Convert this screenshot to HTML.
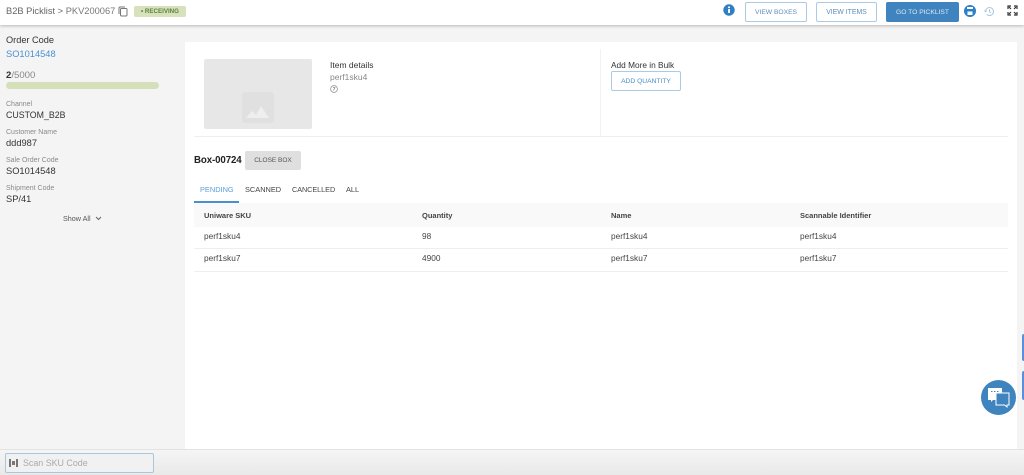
<!DOCTYPE html>
<html><head><meta charset="utf-8">
<style>
html,body{margin:0;padding:0}
body{width:1024px;height:475px;overflow:hidden;background:#f4f4f4;font-family:"Liberation Sans",sans-serif;position:relative;color:#333}
.a{position:absolute;white-space:nowrap}
.btn{position:absolute;box-sizing:border-box;height:20px;border:1px solid #a9cbe6;border-radius:2px;background:#fff;color:#5b8fb9;font-size:6.7px;text-align:center;line-height:20px}
.lbl{font-size:7px;color:#8a8a8a}
.val{font-size:9.3px;color:#333}
.th{font-size:7.5px;color:#444;font-weight:bold}
.td{font-size:8.3px;color:#444}
.tab{font-size:7.4px;color:#444}
</style></head><body>
<div class="a" style="left:0;top:0;width:1024px;height:25px;background:#fff;box-shadow:0 1px 3px rgba(0,0,0,.25)"></div>
<div class="a" style="left:6px;top:6px;font-size:9.3px;color:#666">B2B Picklist &gt; <span style="color:#777">PKV200067</span></div>
<svg class="a" style="left:118px;top:6px" width="10" height="11" viewBox="0 0 10 11" fill="none" stroke="#777" stroke-width="1"><rect x="2.5" y="2.5" width="6.5" height="7.5" rx="1"/><path d="M1 8V2a1 1 0 0 1 1-1h5"/></svg>
<div class="a" style="left:134px;top:6px;width:52px;height:11px;background:#d7e2bd;border-radius:2px;color:#5f7f3a;font-size:6.2px;line-height:11px;text-align:center;font-weight:bold">• RECEIVING</div>

<svg class="a" style="left:723px;top:4px" width="12" height="12" viewBox="0 0 12 12"><circle cx="6" cy="6" r="5.7" fill="#2f7fc4"/><rect x="5.1" y="5" width="1.9" height="4" fill="#fff"/><rect x="5.1" y="2.5" width="1.9" height="1.6" fill="#fff"/></svg>
<div class="btn" style="left:745px;top:2px;width:62px">VIEW BOXES</div>
<div class="btn" style="left:816px;top:2px;width:61px;font-size:6.9px">VIEW ITEMS</div>
<div class="btn" style="left:886px;top:2px;width:73px;background:#3f84bf;border-color:#3f84bf;color:#dce9f4">GO TO PICKLIST</div>
<svg class="a" style="left:964px;top:5px" width="12" height="12" viewBox="0 0 12 12"><circle cx="6" cy="6" r="6" fill="#2f7fc4"/><rect x="3" y="2" width="6" height="2" fill="#fff"/><rect x="3.5" y="6.5" width="5" height="3.5" fill="#fff"/></svg>
<svg class="a" style="left:984px;top:6px" width="11" height="11" viewBox="0 0 11 11" fill="none" stroke="#a9c8e2" stroke-width="1"><path d="M1.5 5.5a4 4 0 1 1 1.2 2.9"/><path d="M0.5 4.5l1 1.2 1.2-1"/><path d="M5.5 3.2v2.5l1.6 1"/></svg>
<svg class="a" style="left:1007px;top:5px" width="11" height="11" viewBox="0 0 11 11" fill="none" stroke="#333" stroke-width="1.2"><path d="M1 4V1h3M2 2l2 2M7 1h3v3M9 2L7 4M1 7v3h3M2 9l2-2M10 7v3H7M9 9L7 7"/></svg>

<div class="a" style="left:6px;top:35px;font-size:9.2px;color:#333">Order Code</div>
<div class="a" style="left:6px;top:49px;font-size:9.3px;color:#4a90d0">SO1014548</div>
<div class="a" style="left:6px;top:70px;font-size:9.6px;color:#888"><b style="color:#333;font-weight:bold">2</b>/5000</div>
<div class="a" style="left:6px;top:82px;width:153px;height:7px;background:#d5e0bb;border-radius:4px"></div>
<div class="a lbl" style="left:6px;top:101px">Channel</div>
<div class="a val" style="left:6px;top:110px;font-size:8.8px">CUSTOM_B2B</div>
<div class="a lbl" style="left:6px;top:129px">Customer Name</div>
<div class="a val" style="left:6px;top:138px">ddd987</div>
<div class="a lbl" style="left:6px;top:157px">Sale Order Code</div>
<div class="a val" style="left:6px;top:166px">SO1014548</div>
<div class="a lbl" style="left:6px;top:185px">Shipment Code</div>
<div class="a val" style="left:6px;top:194px">SP/41</div>
<div class="a" style="left:63px;top:214px;font-size:7.2px;color:#555">Show All</div>
<svg class="a" style="left:95px;top:216px" width="7" height="5" viewBox="0 0 7 5" fill="none" stroke="#666"><path d="M1 1l2.5 2.5L6 1"/></svg>

<div class="a" style="left:185px;top:42px;width:832px;height:407px;background:#fff"></div>
<div class="a" style="left:204px;top:59px;width:108px;height:70px;background:#e7e7e7;border-radius:2px"></div>
<div class="a" style="left:242px;top:92px;width:32px;height:31px;background:#e0e0e0;border-radius:3px"></div>
<svg class="a" style="left:245px;top:105px" width="26" height="14" viewBox="0 0 26 14"><path d="M1 13l6-7 4 4 5-9 8 12z" fill="#eeeeee"/></svg>
<div class="a" style="left:330px;top:60px;font-size:8.5px;color:#333">Item details</div>
<div class="a" style="left:330px;top:72px;font-size:8.5px;color:#888">perf1sku4</div>
<svg class="a" style="left:330px;top:85px" width="8" height="8" viewBox="0 0 8 8" fill="none" stroke="#888" stroke-width=".7"><circle cx="4" cy="4" r="3.4"/><path d="M3 2.6h2L3.4 5.4"/></svg>
<div class="a" style="left:600px;top:49px;width:1px;height:87px;background:#f2f2f2"></div>
<div class="a" style="left:611px;top:60px;font-size:8.3px;color:#333">Add More in Bulk</div>
<div class="btn" style="left:611px;top:71px;width:70px;color:#4a8cc4;border-color:#a9cbe6">ADD QUANTITY</div>
<div class="a" style="left:194px;top:136px;width:814px;height:1px;background:#eeeeee"></div>

<div class="a" style="left:194px;top:155px;font-size:9.7px;color:#222;font-weight:bold;letter-spacing:-.1px">Box-00724</div>
<div class="a" style="left:245px;top:151px;width:56px;height:19px;background:#dfdfdf;border-radius:2px;font-size:6.5px;color:#555;text-align:center;line-height:20px">CLOSE BOX</div>

<div class="a tab" style="left:200px;top:185px;color:#5c9ddb">PENDING</div>
<div class="a" style="left:194px;top:201px;width:45px;height:2px;background:#4a8fd0"></div>
<div class="a tab" style="left:245px;top:185px">SCANNED</div>
<div class="a tab" style="left:292px;top:185px;font-size:7.2px">CANCELLED</div>
<div class="a tab" style="left:346px;top:185px">ALL</div>

<div class="a" style="left:194px;top:203px;width:814px;height:24px;background:#f9f9f9"></div>
<div class="a th" style="left:204px;top:211px">Uniware SKU</div>
<div class="a th" style="left:422px;top:211px">Quantity</div>
<div class="a th" style="left:611px;top:211px">Name</div>
<div class="a th" style="left:800px;top:211px">Scannable Identifier</div>
<div class="a td" style="left:204px;top:231px">perf1sku4</div>
<div class="a td" style="left:422px;top:231px">98</div>
<div class="a td" style="left:611px;top:231px">perf1sku4</div>
<div class="a td" style="left:800px;top:231px">perf1sku4</div>
<div class="a" style="left:194px;top:248px;width:814px;height:1px;background:#eeeeee"></div>
<div class="a td" style="left:204px;top:253px">perf1sku7</div>
<div class="a td" style="left:422px;top:253px">4900</div>
<div class="a td" style="left:611px;top:253px">perf1sku7</div>
<div class="a td" style="left:800px;top:253px">perf1sku7</div>
<div class="a" style="left:194px;top:271px;width:814px;height:1px;background:#eeeeee"></div>

<div class="a" style="left:1022px;top:334px;width:2px;height:27px;background:#5b8fdc;border-radius:2px 0 0 2px"></div>
<div class="a" style="left:1022px;top:371px;width:2px;height:29px;background:#5b8fdc;border-radius:2px 0 0 2px"></div>
<svg class="a" style="left:981px;top:380px" width="35" height="35" viewBox="0 0 35 35"><circle cx="17.5" cy="17.5" r="17.5" fill="#3f84bf"/><path d="M7 8h14v12H12l-2 2v-2H7z" fill="#fff"/><path d="M15 13h13v12h-2v2l-2.500-2H15z" fill="#3f84bf" stroke="#fff" stroke-width="1"/><path d="M10 11.5h1.500M13 11.5h1.500M16 11.5h1.500" stroke="#3f84bf" stroke-width="1"/></svg>

<div class="a" style="left:0;top:449px;width:1024px;height:26px;background:linear-gradient(#f5f5f5,#e9e9e9);border-top:1px solid #e2e2e2;box-sizing:border-box"></div>
<div class="a" style="left:5px;top:453px;width:149px;height:20px;box-sizing:border-box;border:1px solid #a9c6de;border-radius:2px;background:#f1f1f1"></div>
<svg class="a" style="left:9px;top:459px" width="9" height="8" viewBox="0 0 9 8"><path d="M0 0h2v8H0zM7 0h2v8H7zM3 2h3v4H3z" fill="#777"/></svg>
<div class="a" style="left:23px;top:458px;font-size:8.9px;color:#aaa">Scan SKU Code</div>
</body></html>
